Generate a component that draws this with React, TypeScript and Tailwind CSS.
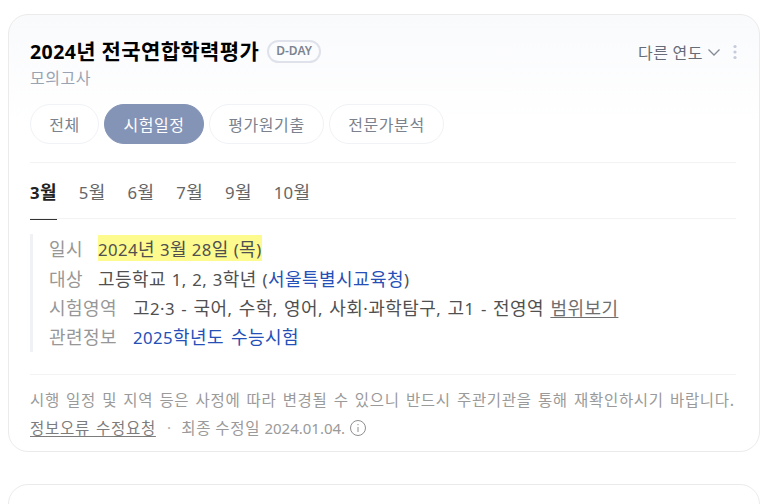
import type { ReactNode } from 'react';

const font = { fontFamily: '"Noto Sans CJK KR", "Noto Sans", sans-serif' };

function T({ children }: { children: string }) {
  const parts = children.split(/([^\uac00-\ud7a3]+)/).filter(Boolean);
  return (
    <>
      {parts.map((p, i) =>
        /[\uac00-\ud7a3]/.test(p) ? (
          <span key={i}>{p}</span>
        ) : (
          <span key={i} className="font-['Noto_Sans'] text-[0.93em]">{p}</span>
        ),
      )}
    </>
  );
}

function Chip({ label, active, w }: { label: string; active?: boolean; w: string }) {
  return (
    <div
      className={`flex h-10 items-center justify-center rounded-[20px] border text-[16px] tracking-[0.55px] ${w} ${
        active ? 'border-[#8494b6] bg-[#8494b6] text-white' : 'border-[#f0f2f6] bg-white text-[#7b828d]'
      }`}
    >
      {label}
    </div>
  );
}

function Row({ label, children, wide }: { label: string; children: ReactNode; wide?: boolean }) {
  return (
    <div className="flex h-[29.4px] items-center whitespace-nowrap">
      <span className={`shrink-0 text-[#979797] ${wide ? 'w-[84px]' : 'w-[49px]'}`}>{label}</span>
      <span className="text-[#505050]">{children}</span>
    </div>
  );
}

export default function App() {
  return (
    <div style={font} className="h-[504px] w-[773px] overflow-hidden bg-white px-2 pt-3.5">
      <div className="h-[438px] w-[752px] rounded-[20px] border border-[#ebebeb] bg-gradient-to-b from-[#f9fafc] to-white to-[25%] pl-[21px] pr-[23px] pt-6">
        <div className="flex items-start justify-between">
          <div>
            <div className="flex h-6 items-center">
              <h1 className="text-[21px] leading-6 font-bold tracking-[0.4px] whitespace-nowrap text-black"><T>2024년 전국연합학력평가</T></h1>
              <span className="ml-2 flex h-[23px] items-center rounded-full border-2 border-[#dfe2ea] px-[7px] text-[12px] font-semibold font-['Noto_Sans'] text-[#7d8491]">D-DAY</span>
            </div>
            <div className="mt-1 text-[16px] leading-5 tracking-[0.5px] text-[#9aa3b2]">모의고사</div>
          </div>
          <div className="-mr-px flex h-[26px] items-center text-[16px] tracking-[0.5px] text-[#666c78]">
            <span className="-ml-0.5">다른 연도</span>
            <svg className="ml-1" width="14" height="14" viewBox="0 0 14 14" fill="none" stroke="#858b96" strokeWidth="1.3"><path d="M1.5 4.5 7 10l5.5-5.5" /></svg>
            <svg className="ml-3" width="4" height="16" viewBox="0 0 4 16" fill="#c4cbdc"><circle cx="2" cy="2.5" r="1.6" /><circle cx="2" cy="8" r="1.6" /><circle cx="2" cy="13.5" r="1.6" /></svg>
          </div>
        </div>

        <div className="mt-[17px] flex gap-[5px]">
          <Chip label="전체" w="w-[69px]" />
          <Chip label="시험일정" active w="w-[100px]" />
          <Chip label="평가원기출" w="w-[115px]" />
          <Chip label="전문가분석" w="w-[115px]" />
        </div>

        <div className="mt-[18px] h-[57px] border-y border-[#f3f3f3]">
          <div className="flex h-full gap-[22px] text-[18px] leading-[56px] tracking-[0.3px] text-[#666]">
            <span className="relative h-[56px] font-bold text-[#222]"><T>3월</T><span className="absolute bottom-[-1px] left-0 h-px w-full bg-[#333]" /></span>
            <span><T>5월</T></span>
            <span><T>6월</T></span>
            <span><T>7월</T></span>
            <span><T>9월</T></span>
            <span><T>10월</T></span>
          </div>
        </div>

        <div className="mt-[15px] border-l-[3px] border-[#f0f1f5] pl-4 text-[18px] tracking-[0.45px]">
          <Row label="일시"><span className="bg-[#fdfa8e] py-0"><T>2024년 3월 28일 (목)</T></span></Row>
          <Row label="대상"><span className="[word-spacing:0.8px]"><T>고등학교 1, 2, 3학년 (</T><span className="text-[#2450b8]">서울특별시교육청</span><T>)</T></span></Row>
          <Row label="시험영역" wide><span className="[word-spacing:1.5px]"><T>고2·3 - 국어, 수학, 영어, 사회·과학탐구, 고1 - 전영역 </T></span><span className="text-[#6e6e6e] underline underline-offset-2">범위보기</span></Row>
          <Row label="관련정보" wide><span className="text-[#2450b8] [word-spacing:2px]"><T>2025학년도 수능시험</T></span></Row>
        </div>

        <div className="mt-[22px] border-t border-[#f3f3f3] pt-3 text-[15.5px] leading-[25px] tracking-[0.7px] [word-spacing:2px] text-[#9a9a9a]">
          <div className="whitespace-nowrap">시행 일정 및 지역 등은 사정에 따라 변경될 수 있으니 반드시 주관기관을 통해 재확인하시기 바랍니다.</div>
          <div className="mt-[3px] flex items-center whitespace-nowrap">
            <span className="text-[#7c7c7c] underline underline-offset-2">정보오류 수정요청</span>
            <span className="mx-[9px] text-[#b5b5b5]">·</span>
            <span className="-ml-0.5 [word-spacing:0px]">최종 수정일 <span className="font-['Noto_Sans'] text-[15px] tracking-normal">2024.01.04.</span></span>
            <svg className="ml-1" width="18" height="18" viewBox="0 0 18 18" fill="none" stroke="#8f8f8f" strokeWidth="1"><circle cx="9" cy="9" r="7.5" /><path d="M9 8v5" /><path d="M9 5v1.2" /></svg>
          </div>
        </div>
      </div>
      <div className="mt-[32px] h-20 w-[752px] rounded-[20px] border border-[#ebebeb] bg-white" />
    </div>
  );
}
